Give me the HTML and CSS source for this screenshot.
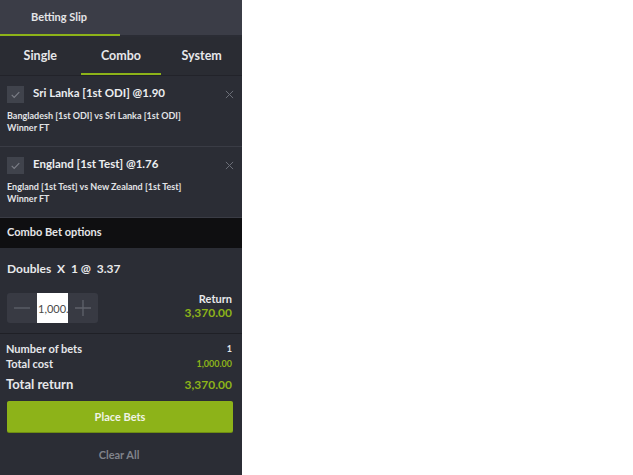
FILE: index.html
```html
<!DOCTYPE html>
<html lang="en">
<head>
  <meta charset="UTF-8" />
  <meta name="viewport" content="width=device-width, initial-scale=1.0" />
  <title>Betting Slip</title>
  <link rel="stylesheet" href="styles.css">
</head>
<body>

  <div class="slip">
    <div class="slip-header">
      <span class="slip-title">Betting Slip</span>
    </div>

    <div class="tabs">
      <div class="tab">Single</div>
      <div class="tab active">Combo</div>
      <div class="tab">System</div>
    </div>

    <div class="bet">
      <div class="bet-top">
        <span class="check">
          <svg viewBox="0 0 18 18"><path d="M5 9.5l2.6 2.6L13 6.5" fill="none" stroke="#7c7f88" stroke-width="1.2"/></svg>
        </span>
        <span class="bet-name">Sri Lanka [1st ODI] @1.90</span>
        <span class="close">
          <svg viewBox="0 0 10 10"><path d="M1 1l8 8M9 1l-8 8" stroke="#6c6f78" stroke-width="1.1"/></svg>
        </span>
      </div>
      <p class="bet-info">Bangladesh [1st ODI] vs Sri Lanka [1st ODI]<br>Winner FT</p>
    </div>

    <div class="bet">
      <div class="bet-top">
        <span class="check">
          <svg viewBox="0 0 18 18"><path d="M5 9.5l2.6 2.6L13 6.5" fill="none" stroke="#7c7f88" stroke-width="1.2"/></svg>
        </span>
        <span class="bet-name">England [1st Test] @1.76</span>
        <span class="close">
          <svg viewBox="0 0 10 10"><path d="M1 1l8 8M9 1l-8 8" stroke="#6c6f78" stroke-width="1.1"/></svg>
        </span>
      </div>
      <p class="bet-info">England [1st Test] vs New Zealand [1st Test]<br>Winner FT</p>
    </div>

    <div class="options-bar">Combo Bet options</div>

    <div class="combo">
      <div class="combo-line">Doubles&nbsp; X&nbsp; 1 @&nbsp; 3.37</div>
      <div class="combo-row">
        <div class="stepper">
          <button class="step">
            <svg viewBox="0 0 20 20"><path d="M2 10h16" stroke="#5f626b" stroke-width="1.3"/></svg>
          </button>
          <input class="stake" type="text" value="1,000.00">
          <button class="step">
            <svg viewBox="0 0 20 20"><path d="M2 10h16M10 2v16" stroke="#5f626b" stroke-width="1.3"/></svg>
          </button>
        </div>
        <div class="return">
          <span class="return-label">Return</span>
          <span class="return-value">3,370.00</span>
        </div>
      </div>
    </div>

    <div class="summary">
      <div class="sum-row">
        <span>Number of bets</span>
        <span class="num">1</span>
      </div>
      <div class="sum-row">
        <span>Total cost</span>
        <span class="cost">1,000.00</span>
      </div>
      <div class="sum-row total">
        <span>Total return</span>
        <span class="green">3,370.00</span>
      </div>
      <button class="place-btn">Place Bets</button>
      <div class="clear">Clear All</div>
    </div>
  </div>

</body>
</html>
```

FILE: styles.css
```css
body {
  margin: 0;
  background-color: #ffffff;
  font-family: 'Lato', 'Open Sans', sans-serif;
}

.slip {
  width: 242px;
  height: 475px;
  background-color: #2b2d35;
  color: #e9e9ec;
}

.slip-header {
  height: 35px;
  background-color: #3b3d47;
  border-bottom: 2px solid #2b2d35;
  position: relative;
}

/* green marker under the header title */
.slip-header::after {
  content: '';
  position: absolute;
  left: 0;
  bottom: -1px;
  width: 120px;
  height: 2px;
  background-color: #8db319;
}

.slip-title {
  display: block;
  padding: 10px 0 0 31px;
  font-size: 11px;
  font-weight: 700;
  color: #e4e5e8;
}

.tabs {
  display: flex;
  height: 38px;
  background-color: #2a2c33;
  border-bottom: 1px solid #22232a;
}

.tab {
  flex: 1;
  display: flex;
  align-items: center;
  justify-content: center;
  font-size: 12.5px;
  font-weight: 700;
  color: #e6e7ea;
  border-bottom: 2px solid transparent;
}

.tab.active {
  border-bottom-color: #8db319;
}

.bet {
  height: 70px;
  border-bottom: 1px solid #3a3c45;
}

.bet-top {
  display: flex;
  align-items: center;
  padding: 10px 8px 0 7px;
}

.check {
  width: 17px;
  height: 17px;
  background-color: #40434c;
  display: flex;
}

.check svg {
  width: 17px;
  height: 17px;
}

.bet-name {
  flex: 1;
  margin-left: 9px;
  margin-top: -4px;
  font-size: 11.5px;
  font-weight: 700;
  color: #eceef0;
}

.close svg {
  width: 9px;
  height: 9px;
  display: block;
}

.bet-info {
  margin: 7px 0 0 7px;
  font-size: 9px;
  font-weight: 700;
  line-height: 12px;
  color: #e2e3e6;
}

.options-bar {
  height: 30px;
  background-color: #0f0f11;
  padding: 0 0 3px 7px;
  box-sizing: border-box;
  display: flex;
  align-items: center;
  font-size: 11px;
  font-weight: 700;
  color: #e6e6e8;
}

.combo {
  padding: 13px 10px 10px 7px;
  border-bottom: 1px solid #1f2026;
}

.combo-line {
  font-size: 12px;
  font-weight: 700;
  color: #e8e9eb;
}

.combo-row {
  display: flex;
  justify-content: space-between;
  align-items: center;
  margin-top: 17px;
}

.stepper {
  display: flex;
  background-color: #383a43;
  border-radius: 3px;
  height: 30px;
}

.step {
  width: 30px;
  height: 30px;
  border: none;
  background: none;
  padding: 0;
  display: flex;
  align-items: center;
  justify-content: center;
}

.step svg {
  width: 20px;
  height: 20px;
}

.stake {
  width: 31px;
  height: 30px;
  border: none;
  padding: 0 0 0 1px;
  margin: 0;
  box-sizing: border-box;
  font-family: 'Lato', sans-serif;
  font-size: 11px;
  color: #4a4a4a;
  background-color: #ffffff;
  outline: none;
}

.return {
  display: flex;
  flex-direction: column;
  align-items: flex-end;
  font-weight: 700;
  margin-top: -4px;
}

.return-label {
  font-size: 11px;
  color: #e8e9eb;
}

.return-value {
  font-size: 12px;
  color: #8db319;
}

.summary {
  padding: 7px 10px 0 6px;
}

.sum-row {
  display: flex;
  justify-content: space-between;
  align-items: center;
  font-size: 11px;
  font-weight: 700;
  color: #e6e7ea;
  height: 15px;
}

.sum-row .num {
  font-size: 9px;
}

.sum-row .cost {
  font-size: 9px;
  color: #8db319;
}

.sum-row.total {
  font-size: 13px;
  height: 20px;
  margin-top: 3px;
}

.sum-row.total .green {
  font-size: 12px;
}

.green {
  color: #8db319;
}

.place-btn {
  display: block;
  width: 226px;
  height: 31px;
  margin: 7px 0 0 1px;
  background-color: #8db319;
  border: none;
  border-radius: 2px;
  box-shadow: 0 1px 0 #6f8d12;
  color: #f0f3e6;
  font-family: 'Lato', sans-serif;
  font-size: 11px;
  font-weight: 700;
}

.clear {
  text-align: center;
  margin-top: 16px;
  font-size: 11px;
  font-weight: 700;
  color: #80838b;
}
```
